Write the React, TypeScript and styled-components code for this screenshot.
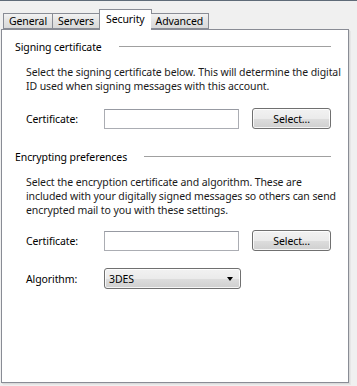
import styled, { createGlobalStyle } from "styled-components";

const GlobalStyle = createGlobalStyle`
  html, body {
    margin: 0;
    padding: 0;
    background: #f0f0f0;
  }
  body {
    font-family: "Noto Sans", "Open Sans", sans-serif;
    font-size: 10.5px;
    letter-spacing: -0.1px;
    color: #000;
  }
`;

const Window = styled.div`
  width: 357px;
  height: 386px;
  box-sizing: border-box;
  border-top: 1px solid #5f6b78;
  background: #f0f0f0;
  display: flex;
  flex-direction: column;
  overflow: hidden;
`;

const TabStrip = styled.div`
  display: flex;
  align-items: flex-end;
  height: 28px;
  padding-left: 3px;
  position: relative;
  z-index: 1;
`;

const Tab = styled.div<{ $active?: boolean; $first?: boolean }>`
  box-sizing: border-box;
  height: ${(p) => (p.$active ? "21px" : "16px")};
  margin-bottom: ${(p) => (p.$active ? "-1px" : "0")};
  padding: ${(p) => (p.$active ? "0 6px 3px" : "0 5px")};
  margin-left: ${(p) => (p.$active ? "-1px" : "0")};
  margin-right: ${(p) => (p.$active ? "-1px" : "0")};
  border: 1px solid #898c95;
  border-bottom: ${(p) => (p.$active ? "none" : "1px solid #898c95")};
  border-left-width: ${(p) => (p.$first || p.$active ? "1px" : "0")};
  background: ${(p) =>
    p.$active ? "#fff" : "linear-gradient(#f2f2f2, #e3e3e3 50%, #d9d9d9)"};
  display: flex;
  align-items: center;
  line-height: 14px;
  white-space: nowrap;
`;

const Panel = styled.div`
  margin-left: 1px;
  width: 348px;
  height: 354px;
  box-sizing: border-box;
  border: 1px solid #898c95;
  background: #fff;
  box-shadow: 1px 1px 0 #dadada, 2px 2px 0 #e6e6e6;
  padding: 10px 17px 0 13px;
  display: flex;
  flex-direction: column;
`;

const Heading = styled.div<{ $gap: number }>`
  display: flex;
  align-items: center;
  gap: 17px;
  line-height: 14px;
  margin-top: ${(p) => p.$gap}px;
  white-space: nowrap;

  &::after {
    content: "";
    flex: 1;
    height: 1px;
    margin-top: -2px;
    background: #a0a0a0;
    box-shadow: 0 1px 0 #fff;
  }
`;

const Description = styled.p<{ $gap: number }>`
  margin: ${(p) => p.$gap}px 0 0 11px;
  line-height: 14px;
  white-space: nowrap;
  color: #1a1a1a;
`;

const Row = styled.div<{ $gap: number }>`
  display: flex;
  align-items: center;
  height: 21px;
  margin-top: ${(p) => p.$gap}px;
  padding-left: 11px;
`;

const Label = styled.label`
  width: 78px;
  line-height: 14px;
`;

const TextBox = styled.div`
  box-sizing: border-box;
  width: 136px;
  height: 20px;
  border: 1px solid #abadb3;
  border-top-color: #979aa2;
  background: #fff;
`;

const Button = styled.button`
  box-sizing: border-box;
  margin-left: 13px;
  width: 79px;
  height: 21px;
  border: 1px solid #707070;
  border-radius: 3px;
  background: linear-gradient(#f2f2f2 0%, #ebebeb 50%, #dddddd 51%, #cfcfcf 100%);
  box-shadow: inset 0 0 0 1px rgba(255, 255, 255, 0.8);
  font: inherit;
  letter-spacing: inherit;
  line-height: 14px;
  color: #000;
  padding: 0;
`;

const Select = styled.div`
  box-sizing: border-box;
  width: 137px;
  height: 21px;
  border: 1px solid #707070;
  border-radius: 3px;
  background: linear-gradient(#f2f2f2 0%, #ebebeb 50%, #dddddd 51%, #cfcfcf 100%);
  box-shadow: inset 0 0 0 1px rgba(255, 255, 255, 0.8);
  display: flex;
  align-items: center;
  justify-content: space-between;
  padding: 0 7px 0 4px;
  line-height: 14px;
`;

const Arrow = styled.span`
  width: 0;
  height: 0;
  border-left: 3.5px solid transparent;
  border-right: 3.5px solid transparent;
  border-top: 4px solid #000;
`;

export default function App() {
  return (
    <>
      <GlobalStyle />
      <Window>
        <TabStrip>
          <Tab $first>General</Tab>
          <Tab>Servers</Tab>
          <Tab $active>Security</Tab>
          <Tab>Advanced</Tab>
        </TabStrip>
        <Panel>
          <Heading $gap={0}>Signing certificate</Heading>
          <Description $gap={11}>
            Select the signing certificate below. This will determine the digital
            <br />
            ID used when signing messages with this account.
          </Description>
          <Row $gap={15}>
            <Label>Certificate:</Label>
            <TextBox />
            <Button>Select...</Button>
          </Row>
          <Heading $gap={21}>Encrypting preferences</Heading>
          <Description $gap={11}>
            Select the encryption certificate and algorithm. These are
            <br />
            included with your digitally signed messages so others can send
            <br />
            encrypted mail to you with these settings.
          </Description>
          <Row $gap={13}>
            <Label>Certificate:</Label>
            <TextBox />
            <Button>Select...</Button>
          </Row>
          <Row $gap={17}>
            <Label>Algorithm:</Label>
            <Select>
              3DES
              <Arrow />
            </Select>
          </Row>
        </Panel>
      </Window>
    </>
  );
}
